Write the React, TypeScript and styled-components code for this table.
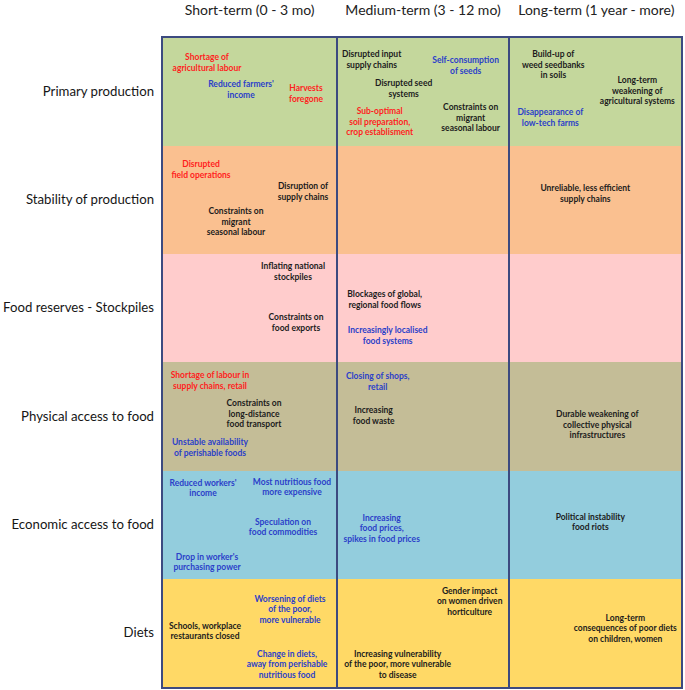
import styled, { createGlobalStyle } from "styled-components";

type Tone = "red" | "blue" | "black";

interface Note {
	x: number;
	y: number;
	tone: Tone;
	lines: string[];
}

interface Row {
	label: string;
	bg: string;
	cells: Note[][];
}

const toneColor: Record<Tone, string> = {
	red: "#ff1e1e",
	blue: "#2b3fc9",
	black: "#1c1c1c",
};

const rows: Row[] = [
	{
		label: "Primary production",
		bg: "#c4d79c",
		cells: [
			[
				{ x: 44, y: 14, tone: "red", lines: ["Shortage of", "agricultural labour"] },
				{ x: 78, y: 41, tone: "blue", lines: ["Reduced farmers'", "income"] },
				{ x: 143, y: 45, tone: "red", lines: ["Harvests", "foregone"] },
			],
			[
				{ x: 34, y: 11, tone: "black", lines: ["Disrupted input", "supply chains"] },
				{ x: 128, y: 17, tone: "blue", lines: ["Self-consumption", "of seeds"] },
				{ x: 66, y: 40, tone: "black", lines: ["Disrupted seed", "systems"] },
				{ x: 42, y: 68, tone: "red", lines: ["Sub-optimal", "soil preparation,", "crop establisment"] },
				{ x: 133, y: 64, tone: "black", lines: ["Constraints on", "migrant", "seasonal labour"] },
			],
			[
				{ x: 43, y: 11, tone: "black", lines: ["Build-up of", "weed seedbanks", "in soils"] },
				{ x: 127, y: 37, tone: "black", lines: ["Long-term", "weakening of", "agricultural systems"] },
				{ x: 40, y: 69, tone: "blue", lines: ["Disappearance of", "low-tech farms"] },
			],
		],
	},
	{
		label: "Stability of production",
		bg: "#fac090",
		cells: [
			[
				{ x: 38, y: 13, tone: "red", lines: ["Disrupted", "field operations"] },
				{ x: 140, y: 35, tone: "black", lines: ["Disruption of", "supply chains"] },
				{ x: 73, y: 60, tone: "black", lines: ["Constraints on", "migrant", "seasonal labour"] },
			],
			[],
			[{ x: 75, y: 37, tone: "black", lines: ["Unreliable, less efficient", "supply chains"] }],
		],
	},
	{
		label: "Food reserves - Stockpiles",
		bg: "#ffcccc",
		cells: [
			[
				{ x: 130, y: 7, tone: "black", lines: ["Inflating national", "stockpiles"] },
				{ x: 133, y: 58, tone: "black", lines: ["Constraints on", "food exports"] },
			],
			[
				{ x: 47, y: 35, tone: "black", lines: ["Blockages of  global,", "regional food flows"] },
				{ x: 50, y: 71, tone: "blue", lines: ["Increasingly localised", "food systems"] },
			],
			[],
		],
	},
	{
		label: "Physical access to food",
		bg: "#c4bd97",
		cells: [
			[
				{ x: 47, y: 8, tone: "red", lines: ["Shortage of labour in", "supply chains, retail"] },
				{ x: 91, y: 36, tone: "black", lines: ["Constraints on", "long-distance", "food transport"] },
				{ x: 47, y: 75, tone: "blue", lines: ["Unstable availability", "of perishable foods"] },
			],
			[
				{ x: 40, y: 9, tone: "blue", lines: ["Closing of shops,", "retail"] },
				{ x: 36, y: 43, tone: "black", lines: ["Increasing", "food waste"] },
			],
			[{ x: 87, y: 47, tone: "black", lines: ["Durable weakening of", "collective physical", "infrastructures"] }],
		],
	},
	{
		label: "Economic access to food",
		bg: "#93cddd",
		cells: [
			[
				{ x: 40, y: 7, tone: "blue", lines: ["Reduced workers'", "income"] },
				{ x: 129, y: 6, tone: "blue", lines: ["Most nutritious food", "more expensive"] },
				{ x: 120, y: 46, tone: "blue", lines: ["Speculation on", "food commodities"] },
				{ x: 44, y: 81, tone: "blue", lines: ["Drop in worker's", "purchasing power"] },
			],
			[{ x: 44, y: 42, tone: "blue", lines: ["Increasing", "food prices,", "spikes in food prices"] }],
			[{ x: 80, y: 41, tone: "black", lines: ["Political instability", "food riots"] }],
		],
	},
	{
		label: "Diets",
		bg: "#ffd966",
		cells: [
			[
				{ x: 127, y: 15, tone: "blue", lines: ["Worsening of diets", "of the poor,", "more vulnerable"] },
				{ x: 42, y: 42, tone: "black", lines: ["Schools, workplace", "restaurants closed"] },
				{ x: 124, y: 70, tone: "blue", lines: ["Change in diets,", "away from perishable", "nutritious food"] },
			],
			[
				{ x: 132, y: 7, tone: "black", lines: ["Gender impact", "on women driven", "horticulture"] },
				{ x: 60, y: 70, tone: "black", lines: ["Increasing vulnerability", "of the poor, more vulnerable", "to disease"] },
			],
			[{ x: 115, y: 34, tone: "black", lines: ["Long-term", "consequences of poor diets", "on children, women"] }],
		],
	},
];

const periods = ["Short-term (0 - 3 mo)", "Medium-term (3 - 12 mo)", "Long-term (1 year - more)"];

const App = () => {
	return (
		<>
			<GlobalStyle />
			<Page>
				<HeaderRow>
					<span />
					{periods.map((p) => (
						<Period key={p}>{p}</Period>
					))}
				</HeaderRow>
				<Body>
					<Labels>
						{rows.map((r) => (
							<Label key={r.label}>{r.label}</Label>
						))}
					</Labels>
					<Table>
						{rows.map((r) =>
							r.cells.map((notes, ci) => (
								<Cell key={r.label + ci} $bg={r.bg} $first={ci === 0}>
									{notes.map((n) => (
										<NoteText key={n.lines[0]} $tone={n.tone} style={{ left: n.x, top: n.y }}>
											{n.lines.map((l) => (
												<div key={l}>{l}</div>
											))}
										</NoteText>
									))}
								</Cell>
							))
						)}
					</Table>
				</Body>
			</Page>
		</>
	);
};

export default App;

//STYLES
const GlobalStyle = createGlobalStyle`
	body {
		margin: 0;
		background: #ffffff;
		font-family: Lato, "Liberation Sans", sans-serif;
	}
`;

const Page = styled.div`
	width: 683px;
	height: 690px;
	display: flex;
	flex-direction: column;
`;

const HeaderRow = styled.div`
	display: grid;
	grid-template-columns: 163px repeat(3, 1fr);
	height: 36px;
`;

const Period = styled.div`
	text-align: center;
	font-size: 14px;
	color: #222;
	padding-top: 1px;
	white-space: nowrap;
`;

const Body = styled.div`
	display: grid;
	grid-template-columns: 161px 1fr;
	height: 653px;
`;

const Labels = styled.div`
	display: grid;
	grid-template-columns: minmax(0, 1fr);
	grid-template-rows: repeat(6, 1fr);
	padding: 2px 0;
`;

const Label = styled.div`
	display: flex;
	align-items: center;
	justify-content: flex-end;
	padding-right: 7px;
	padding-bottom: 2px;
	font-size: 13.2px;
	color: #161616;
	white-space: nowrap;
`;

const Table = styled.div`
	display: grid;
	grid-template-columns: repeat(3, 1fr);
	grid-template-rows: repeat(6, 1fr);
	border: 2px solid #3c4a80;
`;

const Cell = styled.div<{ $bg: string; $first: boolean }>`
	position: relative;
	background: ${(p) => p.$bg};
	border-left: ${(p) => (p.$first ? "none" : "2px solid #3c4a80")};
`;

const NoteText = styled.div<{ $tone: Tone }>`
	position: absolute;
	transform: translateX(-50%);
	text-align: center;
	white-space: nowrap;
	font-size: 8.5px;
	line-height: 10.5px;
	font-weight: 700;
	color: ${(p) => toneColor[p.$tone]};
`;
